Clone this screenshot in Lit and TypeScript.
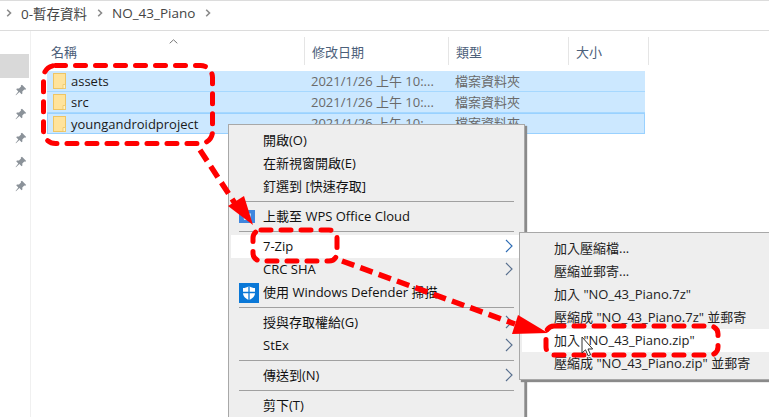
import { LitElement, html, css, svg } from "lit";
import { customElement } from "lit/decorators.js";

const chevron = (cls: string) => html`<svg class="chev ${cls}" width="8" height="14" viewBox="0 0 8 14"><path d="M1 1l6 6-6 6" fill="none" stroke="currentColor" stroke-width="1.2"/></svg>`;
const crumbArrow = html`<svg class="crumb-arrow" width="6" height="8" viewBox="0 0 6 8"><path d="M1.2 .8L4.5 4 1.2 7.2" fill="none" stroke="#8a8a8a" stroke-width="1.6"/></svg>`;
const pin = html`<svg width="12" height="12" viewBox="0 0 12 12"><path d="M7 .8l4.2 4.2-1 .7-.9-.3-2 2 .1 2-.8.8-2.2-2.3L1 11.3l-.4-.4 2.7-3.5L1.200 5.200l.8-.8 2 .1 2-2-.2-.9z" fill="#8b9299"/></svg>`;
const folder = html`<svg class="folder" width="13" height="16" viewBox="0 0 13 16"><rect x=".5" y=".5" width="12" height="15" fill="#ffe39b" stroke="#eec564"/><path d="M10 11.500h2.500v4H10z" fill="#fff1c4" stroke="#eec564" stroke-width=".8"/></svg>`;
const wps = html`<svg width="17" height="14" viewBox="0 0 17 14"><rect width="16" height="13" fill="#3f86de"/><path d="M4 3.500h8l-1 6.500H5z" fill="#cfe2fa"/><path d="M8 2v7" stroke="#3f86de" stroke-width="1.500"/></svg>`;
const defender = html`<svg width="20" height="20" viewBox="0 0 20 20"><rect width="20" height="20" fill="#0a78d7"/><path d="M10 3c2 1.400 4 2 6 2v5c0 3.500-2.500 5.500-6 7-3.500-1.500-6-3.500-6-7V5c2 0 4-.6 6-2z" fill="#fff"/><path d="M10 3v14M4 9.500h12" stroke="#0a78d7" stroke-width="1.300"/></svg>`;

const rows = ["assets", "src", "youngandroidproject"];
const sub = [
  "加入壓縮檔...",
  "壓縮並郵寄...",
  '加入 "NO_43_Piano.7z"',
  '壓縮成 "NO_43_Piano.7z" 並郵寄',
  '加入 "NO_43_Piano.zip"',
  '壓縮成 "NO_43_Piano.zip" 並郵寄',
];

const annotations = svg`
  <g fill="none" stroke="#f00" stroke-width="5" stroke-linecap="round" stroke-dasharray="10 10">
    <rect x="43.500" y="65.500" width="169" height="78" rx="12"/>
    <rect x="253" y="230" width="84" height="31" rx="8"/>
    <rect x="546" y="326" width="172" height="29" rx="8"/>
  </g>
  <g fill="none" stroke="#f00" stroke-width="5.500" stroke-dasharray="13 6.500">
    <path d="M200 150L238 208"/>
    <path d="M342 261L515 324"/>
  </g>
  <g fill="#f00">
    <path d="M253 225L228 206L244 196z"/>
    <path d="M548 333L518 315L512 334z"/>
  </g>
  <path d="M582 337v16l3.500-3.200 2.600 6 2.500-1.100-2.600-5.700h4.700z" fill="#fff" stroke="#333" stroke-width="1"/>
`;

@customElement("app-root")
export class AppRoot extends LitElement {
  static styles = css`
    :host { display: block; width: 769px; height: 417px; position: relative; overflow: hidden; background: #fff;
      font-family: "Open Sans", "Noto Sans CJK TC", sans-serif; font-size: 13px; color: #1a1a1a; }
    .bar { border-top: 1px solid #dcdcdc; border-bottom: 1px solid #dcdcdc; display: flex; align-items: center;
      padding: 0 0 5px 6px; box-sizing: content-box; height: 24px; font-size: 13.5px; color: #444; }
    .crumb-arrow { flex: none; }
    .c1 { margin-left: 9px; width: 66px; white-space: nowrap; }
    .a2 { margin-left: 10px; display: flex; }
    .c2 { margin-left: 9px; width: 84px; white-space: nowrap; }
    .a3 { margin-left: 9px; display: flex; }
    .main { display: flex; height: 386px; }
    .side { width: 31px; flex: none; border-right: 1px solid #f0f0f0; padding-top: 23px; box-sizing: border-box; }
    .side div { height: 24px; width: 29px; display: flex; align-items: center; justify-content: center; padding-left: 13px; box-sizing: border-box; }
    .side .sel { background: #d9d9d9; }
    .content { flex: 1; padding: 6px 0 0 16px; position: relative; }
    .head { display: grid; grid-template-columns: 258px 144px 120px 80px; height: 28px; width: 602px; align-items: center; color: #4c607a; font-size: 13px; }
    .head span { height: 28px; display: flex; align-items: center; padding-left: 7px; border-right: 1px solid #e5e5e5; box-sizing: border-box; }
    .head span:first-child { padding-left: 4px; }
    .sort { position: absolute; left: 138px; top: 8px; }
    .rows { margin-top: 6px; width: 598px; }
    .row { height: 21px; background: #cce8ff; display: grid; grid-template-columns: 257px 144px 120px 1fr; align-items: center; box-sizing: border-box; border-bottom: 1px solid #a6d8ff; color: #6a6a6a; white-space: nowrap; }
    .row:last-child { border: 1px solid #99d1ff; height: 21px; grid-template-columns: 256px 144px 120px 1fr; }
    .name { display: flex; align-items: center; padding-left: 6px; color: #1a1a1a; gap: 5px; }
    .row:last-child .name { padding-left: 5px; }
    .cell { padding: 0 0 2px 7px; overflow: hidden; }
    .folder { flex: none; }
    .menu { position: absolute; left: 228px; top: 124px; width: 297px; height: 300px; background: #eee; border: 1px solid #a8a8a8; box-sizing: border-box;
      box-shadow: 2px 2px 1px #8a8a8a; padding-top: 4px; color: #111; font-size: 13px; }
    .item { height: 23px; box-sizing: border-box; padding-bottom: 2px; display: flex; align-items: center; padding-left: 34px; position: relative; white-space: nowrap; }
    .item.on { background: #fff; margin-left: 2px; padding-left: 32px; margin-right: 5px; }
    .ic { position: absolute; left: 10px; top: 50%; transform: translateY(-50%); display: flex; }
    .sep { height: 7px; display: flex; align-items: center; }
    .sep::after { content: ""; display: block; height: 1px; background: #a0a0a0; margin: 0 9px 0 10px; width: 275px; }
    .chev { position: absolute; right: 11px; top: 4px; color: #59708f; }
    .on .chev { right: 6px; color: #2f6db5; }
    .sub { position: absolute; left: 519px; top: 232px; width: 260px; height: 148px; background: #eee; border: 1px solid #a8a8a8; box-sizing: border-box;
      box-shadow: 2px 2px 1px #8a8a8a; padding: 4px 0 0 2px; color: #222; font-size: 13px; }
    .sub .s { height: 23px; box-sizing: border-box; padding: 0 0 2px 32px; display: flex; align-items: center; white-space: nowrap; }
    .sub .s.on { background: #fff; }
    .notes { position: absolute; left: 0; top: 0; pointer-events: none; }
  `;

  render() {
    return html`
      <div class="bar">
        ${crumbArrow}<span class="c1">0-暫存資料</span>
        <span class="a2">${crumbArrow}</span><span class="c2">NO_43_Piano</span>
        <span class="a3">${crumbArrow}</span>
      </div>
      <div class="main">
        <div class="side">
          <div class="sel"></div>
          ${[0, 1, 2, 3, 4].map(() => html`<div>${pin}</div>`)}
        </div>
        <div class="content">
          <svg class="sort" width="9" height="5" viewBox="0 0 9 5"><path d="M.7 4.300L4.500 .8l3.800 3.500" fill="none" stroke="#777" stroke-width="1"/></svg>
          <div class="head"><span>名稱</span><span>修改日期</span><span>類型</span><span>大小</span></div>
          <div class="rows">
            ${rows.map((r) => html`<div class="row">
              <div class="name">${folder}<span>${r}</span></div>
              <div class="cell">2021/1/26 上午 10:...</div>
              <div class="cell">檔案資料夾</div>
              <div></div>
            </div>`)}
          </div>
        </div>
      </div>
      <div class="menu">
        <div class="item">開啟(O)</div>
        <div class="item">在新視窗開啟(E)</div>
        <div class="item">釘選到 [快速存取]</div>
        <div class="sep"></div>
        <div class="item"><span class="ic">${wps}</span>上載至 WPS Office Cloud</div>
        <div class="sep"></div>
        <div class="item on">7-Zip${chevron("")}</div>
        <div class="item">CRC SHA${chevron("")}</div>
        <div class="item"><span class="ic">${defender}</span>使用 Windows Defender 掃描</div>
        <div class="sep"></div>
        <div class="item">授與存取權給(G)${chevron("")}</div>
        <div class="item">StEx${chevron("")}</div>
        <div class="sep"></div>
        <div class="item">傳送到(N)${chevron("")}</div>
        <div class="sep"></div>
        <div class="item">剪下(T)</div>
      </div>
      <div class="sub">
        ${sub.map((s, i) => html`<div class="s ${i === 4 ? "on" : ""}">${s}</div>`)}
      </div>
      <svg class="notes" width="769" height="417" viewBox="0 0 769 417">${annotations}</svg>
    `;
  }
}
